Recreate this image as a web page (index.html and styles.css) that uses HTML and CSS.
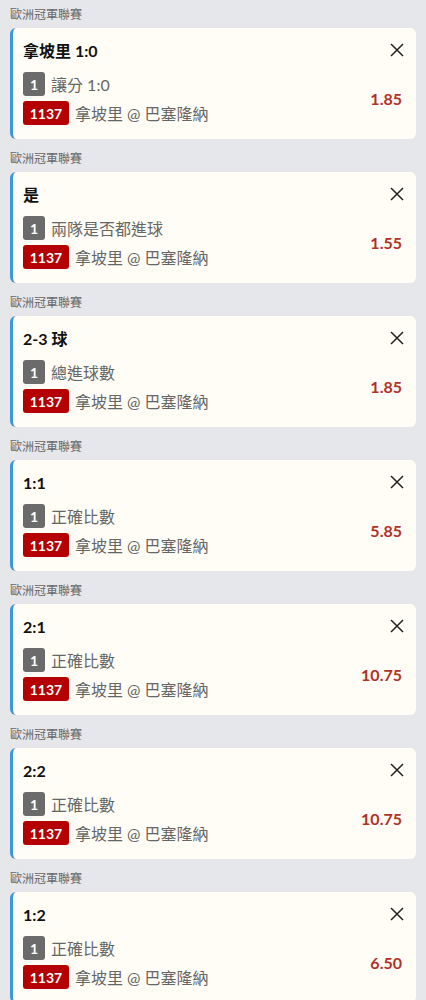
FILE: index.html
```html
<!DOCTYPE html>
<html lang="zh-Hant">
<head>
  <meta charset="UTF-8" />
  <meta name="viewport" content="width=device-width, initial-scale=1.0"/>
  <title>投注單</title>
  <link rel="stylesheet" href="styles.css">
</head>
<body>

  <div class="slip-list">

    <!-- Bet 1 -->
    <div class="slip">
      <div class="league">歐洲冠軍聯賽</div>
      <div class="card">
        <div class="card-head">
          <span class="pick">拿坡里 1:0</span>
          <svg class="close" viewBox="0 0 14 14"><path d="M1 1L13 13M13 1L1 13"/></svg>
        </div>
        <div class="card-body">
          <div class="rows">
            <div class="row"><span class="tag tag-grey">1</span><span class="market">讓分 1:0</span></div>
            <div class="row"><span class="tag tag-red">1137</span><span class="match">拿坡里 @ 巴塞隆納</span></div>
          </div>
          <span class="odds">1.85</span>
        </div>
      </div>
    </div>

    <!-- Bet 2 -->
    <div class="slip">
      <div class="league">歐洲冠軍聯賽</div>
      <div class="card">
        <div class="card-head">
          <span class="pick">是</span>
          <svg class="close" viewBox="0 0 14 14"><path d="M1 1L13 13M13 1L1 13"/></svg>
        </div>
        <div class="card-body">
          <div class="rows">
            <div class="row"><span class="tag tag-grey">1</span><span class="market">兩隊是否都進球</span></div>
            <div class="row"><span class="tag tag-red">1137</span><span class="match">拿坡里 @ 巴塞隆納</span></div>
          </div>
          <span class="odds">1.55</span>
        </div>
      </div>
    </div>

    <!-- Bet 3 -->
    <div class="slip">
      <div class="league">歐洲冠軍聯賽</div>
      <div class="card">
        <div class="card-head">
          <span class="pick">2-3 球</span>
          <svg class="close" viewBox="0 0 14 14"><path d="M1 1L13 13M13 1L1 13"/></svg>
        </div>
        <div class="card-body">
          <div class="rows">
            <div class="row"><span class="tag tag-grey">1</span><span class="market">總進球數</span></div>
            <div class="row"><span class="tag tag-red">1137</span><span class="match">拿坡里 @ 巴塞隆納</span></div>
          </div>
          <span class="odds">1.85</span>
        </div>
      </div>
    </div>

    <!-- Bet 4 -->
    <div class="slip">
      <div class="league">歐洲冠軍聯賽</div>
      <div class="card">
        <div class="card-head">
          <span class="pick">1:1</span>
          <svg class="close" viewBox="0 0 14 14"><path d="M1 1L13 13M13 1L1 13"/></svg>
        </div>
        <div class="card-body">
          <div class="rows">
            <div class="row"><span class="tag tag-grey">1</span><span class="market">正確比數</span></div>
            <div class="row"><span class="tag tag-red">1137</span><span class="match">拿坡里 @ 巴塞隆納</span></div>
          </div>
          <span class="odds">5.85</span>
        </div>
      </div>
    </div>

    <!-- Bet 5 -->
    <div class="slip">
      <div class="league">歐洲冠軍聯賽</div>
      <div class="card">
        <div class="card-head">
          <span class="pick">2:1</span>
          <svg class="close" viewBox="0 0 14 14"><path d="M1 1L13 13M13 1L1 13"/></svg>
        </div>
        <div class="card-body">
          <div class="rows">
            <div class="row"><span class="tag tag-grey">1</span><span class="market">正確比數</span></div>
            <div class="row"><span class="tag tag-red">1137</span><span class="match">拿坡里 @ 巴塞隆納</span></div>
          </div>
          <span class="odds">10.75</span>
        </div>
      </div>
    </div>

    <!-- Bet 6 -->
    <div class="slip">
      <div class="league">歐洲冠軍聯賽</div>
      <div class="card">
        <div class="card-head">
          <span class="pick">2:2</span>
          <svg class="close" viewBox="0 0 14 14"><path d="M1 1L13 13M13 1L1 13"/></svg>
        </div>
        <div class="card-body">
          <div class="rows">
            <div class="row"><span class="tag tag-grey">1</span><span class="market">正確比數</span></div>
            <div class="row"><span class="tag tag-red">1137</span><span class="match">拿坡里 @ 巴塞隆納</span></div>
          </div>
          <span class="odds">10.75</span>
        </div>
      </div>
    </div>

    <!-- Bet 7 -->
    <div class="slip">
      <div class="league">歐洲冠軍聯賽</div>
      <div class="card">
        <div class="card-head">
          <span class="pick">1:2</span>
          <svg class="close" viewBox="0 0 14 14"><path d="M1 1L13 13M13 1L1 13"/></svg>
        </div>
        <div class="card-body">
          <div class="rows">
            <div class="row"><span class="tag tag-grey">1</span><span class="market">正確比數</span></div>
            <div class="row"><span class="tag tag-red">1137</span><span class="match">拿坡里 @ 巴塞隆納</span></div>
          </div>
          <span class="odds">6.50</span>
        </div>
      </div>
    </div>

  </div>

</body>
</html>
```

FILE: styles.css
```css
body {
  margin: 0;
  padding: 0;
  font-family: Lato, "Noto Sans CJK TC", sans-serif;
  background-color: #e6e7eb;
  color: #222;
}

.slip-list {
  padding: 0 10px;
}

.slip {
  padding-bottom: 5px;
}

.league {
  height: 28px;
  line-height: 30px;
  font-size: 12px;
  color: #666;
}

.card {
  background-color: #fffdf5;
  border-left: 3px solid #3a98dc;
  border-radius: 6px;
  padding: 12px 14px 12px 10px;
  height: 87px;
}

.card-head {
  display: flex;
  justify-content: space-between;
  align-items: center;
  height: 20px;
}

.pick {
  font-size: 16px;
  font-weight: bold;
  color: #111;
}

.close {
  width: 14px;
  height: 14px;
  margin-right: -2px;
}

.close path {
  stroke: #222;
  stroke-width: 1.5;
  fill: none;
}

.card-body {
  display: flex;
  justify-content: space-between;
  align-items: center;
  margin-top: 12px;
}

.rows {
  display: flex;
  flex-direction: column;
  gap: 5px;
}

.row {
  display: flex;
  align-items: center;
  height: 24px;
  font-size: 16px;
  color: #666;
}

.tag {
  display: inline-flex;
  align-items: center;
  justify-content: center;
  height: 24px;
  border-radius: 3px;
  color: #fff;
  font-size: 14px;
  font-weight: bold;
  margin-right: 6px;
}

.tag-grey {
  width: 22px;
  background-color: #6b6b6b;
}

.tag-red {
  width: 46px;
  background-color: #b40000;
}

.odds {
  font-size: 16px;
  font-weight: bold;
  color: #b0302a;
}
```
